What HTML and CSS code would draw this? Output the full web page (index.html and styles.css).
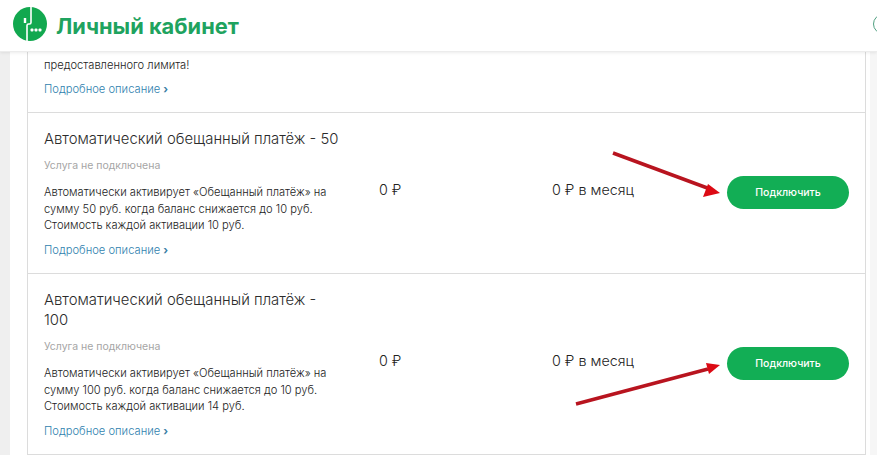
FILE: index.html
```html
<!DOCTYPE html>
<html lang="ru">
<head>
<meta charset="utf-8">
<title>Личный кабинет</title>
<link rel="stylesheet" href="styles.css">
</head>
<body>
<header class="topbar">
  <svg class="logo" width="34" height="34" viewBox="0 0 34 34">
    <circle cx="17" cy="17" r="17" fill="#12a84f"/>
    <path d="M18 0V15.500Q18 17 16.500 17H15.500Q14 17 14 18.500V34" fill="none" stroke="#fff" stroke-width="1.600"/>
    <path d="M12 11V16" fill="none" stroke="#fff" stroke-width="2.400"/>
    <g fill="#fff"><rect x="17.500" y="21.500" width="3" height="3" rx="1"/><rect x="21.500" y="21.500" width="3" height="3" rx="1"/><rect x="25.500" y="21.500" width="3" height="3" rx="1"/></g>
  </svg>
  <span class="brand">Личный кабинет</span>
  <span class="round"></span>
</header>
<main class="page">
  <section class="card">
    <article class="row row-cut">
      <p class="desc">предоставленного лимита!</p>
      <a class="more">Подробное описание <span class="chev">›</span></a>
    </article>
    <article class="row row-grid">
      <div class="info">
        <h2 class="title">Автоматический обещанный платёж - 50</h2>
        <div class="status">Услуга не подключена</div>
        <p class="desc">Автоматически активирует «Обещанный платёж» на<br>сумму 50 руб. когда баланс снижается до 10 руб.<br>Стоимость каждой активации 10 руб.</p>
        <a class="more">Подробное описание <span class="chev">›</span></a>
      </div>
      <div class="price">0 ₽</div>
      <div class="price">0 ₽ в месяц</div>
      <button class="connect">Подключить</button>
    </article>
    <article class="row row-grid row-tall">
      <div class="info">
        <h2 class="title">Автоматический обещанный платёж - 100</h2>
        <div class="status">Услуга не подключена</div>
        <p class="desc">Автоматически активирует «Обещанный платёж» на<br>сумму 100 руб. когда баланс снижается до 10 руб.<br>Стоимость каждой активации 14 руб.</p>
        <a class="more">Подробное описание <span class="chev">›</span></a>
      </div>
      <div class="price">0 ₽</div>
      <div class="price">0 ₽ в месяц</div>
      <button class="connect">Подключить</button>
    </article>
  </section>
</main>
<svg class="arrows" width="877" height="455" viewBox="0 0 877 455">
  <g fill="none" stroke="#b8141f" stroke-width="3.500">
    <path d="M613 153L710 189"/>
    <path d="M576 404L708 369"/>
  </g>
  <g fill="#dc0a14">
    <path d="M720 193L703 197L708 184Z"/>
    <path d="M720 365L706 363L709 374Z"/>
  </g>
</svg>
</body>
</html>
```
FILE: styles.css
```css
* { box-sizing: border-box; }
html, body { margin: 0; height: 100%; }
body {
  width: 877px;
  height: 455px;
  overflow: hidden;
  position: relative;
  background: #fff;
  font-family: Inter, "Liberation Sans", sans-serif;
  color: #333;
}
.topbar {
  height: 52px;
  display: flex;
  align-items: center;
  padding: 0 0 4px 13px;
  background: #fff;
  border-bottom: 1px solid #ececec;
  box-shadow: 0 1px 3px rgba(0,0,0,.08);
  position: relative;
  z-index: 1;
}
.logo { flex: none; }
.brand {
  margin: 4px 0 0 9px;
  font-size: 21.800px;
  line-height: 26px;
  font-weight: 700;
  color: #1fa35f;
}
.round {
  width: 20px;
  height: 20px;
  margin-left: auto;
  margin-right: -16px;
  border: 1.500px solid #4f9f80;
  border-radius: 50%;
  flex: none;
}
.page {
  height: 403px;
  padding: 0 7px 0 10px;
  background: linear-gradient(to right, #efefef 0, #efefef 10px, #fff 10px, #fff 870px, #f6f6f6 870px);
  overflow: hidden;
}
.card {
  margin: 0 5px 0 17px;
  border: 1px solid #dcdcdc;
  border-top: 0;
  width: 839px;
}
.row { padding: 16px 0 16px 16px; border-bottom: 1px solid #dcdcdc; }
.row-cut { height: 61px; padding-top: 4px; }
.row-grid {
  display: grid;
  height: 161px;
  grid-template-columns: 335px 173px 1fr 122px;
  align-items: center;
  padding-right: 16px;
}
.row-tall { height: 181px; }
.info { width: 300px; align-self: start; }
.title {
  margin: 0;
  font-size: 14.850px;
  line-height: 20px;
  font-weight: 300;
  color: #2b2b2b;
}
.status {
  margin-top: 9px;
  font-size: 10.500px;
  line-height: 16px;
  color: #a5a5a5;
}
.desc {
  margin: 10px 0 0;
  font-size: 11.150px;
  line-height: 16.500px;
  font-weight: 300;
  color: #222;
}
.row-cut .desc { margin: 1px 0 0; }
.row-cut .more { margin-top: 7px; }
.more {
  display: block;
  margin-top: 8px;
  font-size: 11.200px;
  line-height: 16px;
  font-weight: 300;
  color: #2f7fae;
}
.chev { font-weight: 700; color: #3a7ea5; }
.price {
  font-size: 14.300px;
  line-height: 20px;
  font-weight: 300;
  color: #222;
  margin-top: -6px;
}
.connect {
  width: 122px;
  height: 33px;
  margin-top: -1px;
  border: 0;
  border-radius: 17px;
  background: #12ae55;
  color: #fff;
  font: 500 10.500px Inter, "Liberation Sans", sans-serif;
  padding: 0;
}
.arrows { position: absolute; left: 0; top: 0; pointer-events: none; z-index: 2; }
```
